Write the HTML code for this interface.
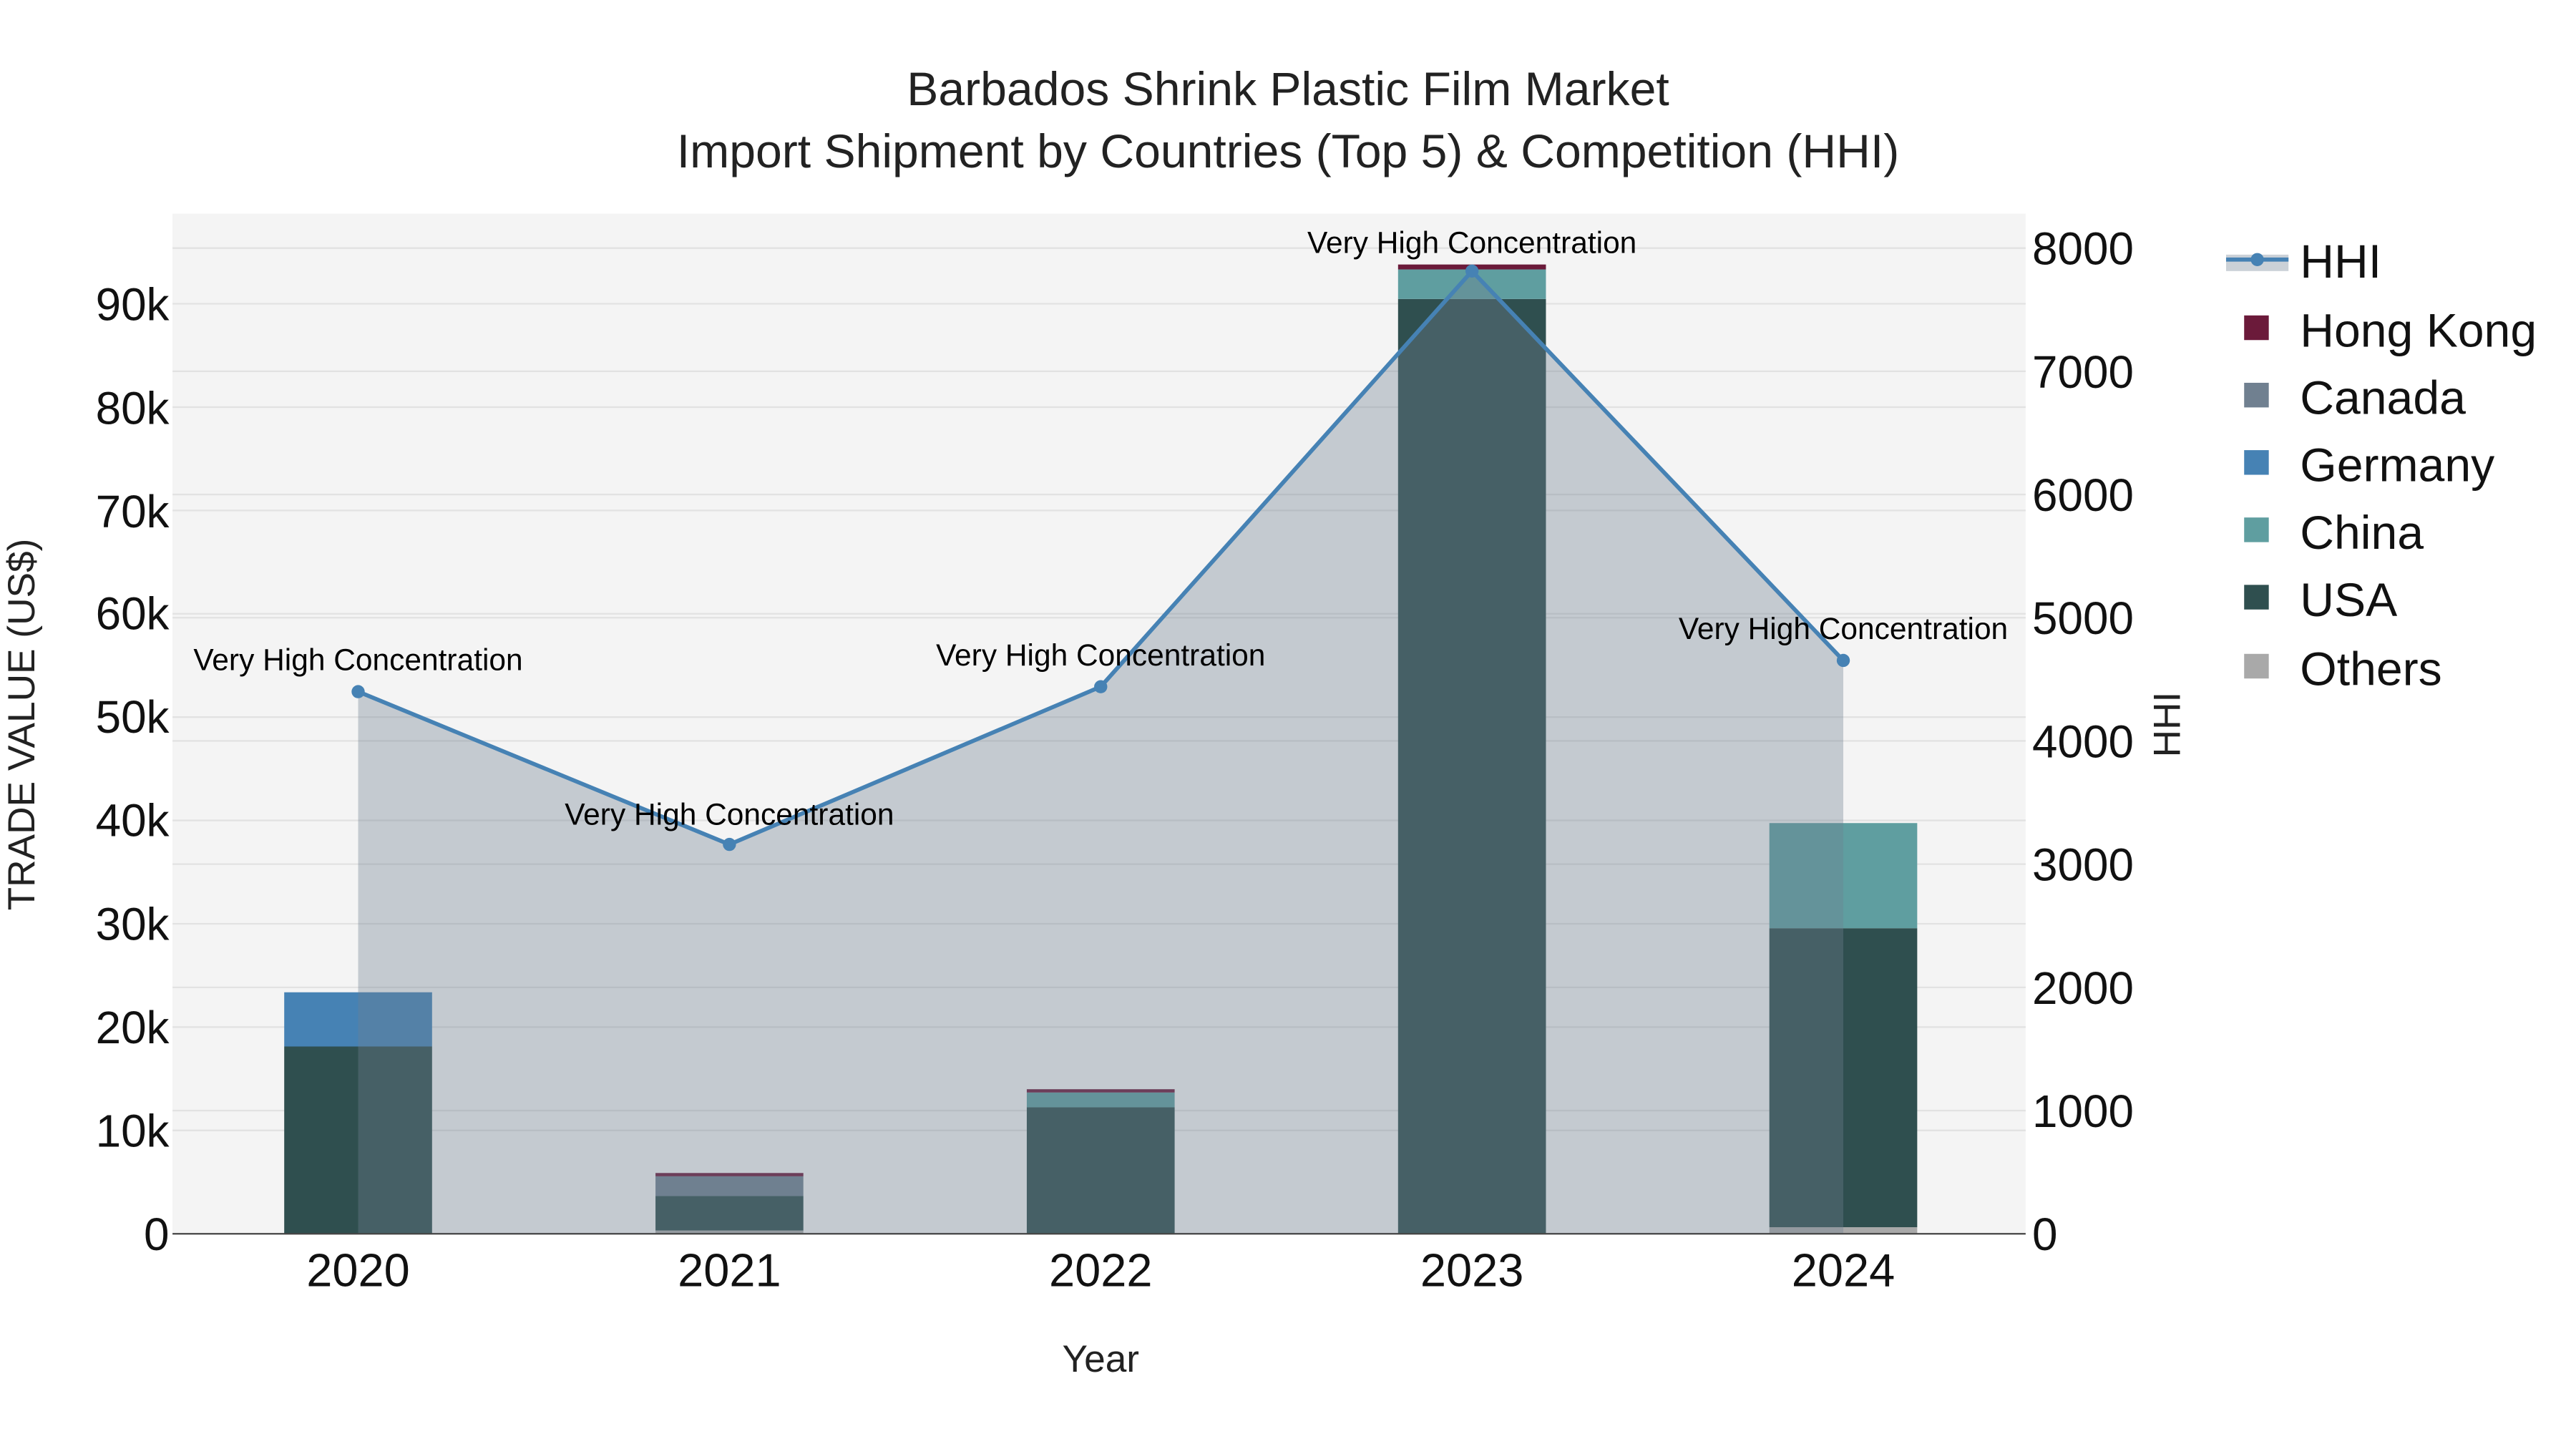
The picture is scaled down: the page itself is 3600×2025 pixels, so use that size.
<!DOCTYPE html>
<html><head><meta charset="utf-8"><style>html,body{margin:0;padding:0;background:#fff}svg{display:block}text{font-family:"Liberation Sans",sans-serif}</style></head>
<body>
<svg width="3600" height="2025" viewBox="0 0 1568 882" preserveAspectRatio="none" xmlns="http://www.w3.org/2000/svg">
<rect width="1568" height="882" fill="#fff"/>
<rect x="105" y="130" width="1128" height="621" fill="#f4f4f4"/>
<g stroke="#e2e2e2" stroke-width="1">
<line x1="105" x2="1233" y1="688.1" y2="688.1"/><line x1="105" x2="1233" y1="625.2" y2="625.2"/><line x1="105" x2="1233" y1="562.3" y2="562.3"/><line x1="105" x2="1233" y1="499.4" y2="499.4"/><line x1="105" x2="1233" y1="436.5" y2="436.5"/><line x1="105" x2="1233" y1="373.6" y2="373.6"/><line x1="105" x2="1233" y1="310.7" y2="310.7"/><line x1="105" x2="1233" y1="247.8" y2="247.8"/><line x1="105" x2="1233" y1="184.9" y2="184.9"/>
<line x1="105" x2="1233" y1="676" y2="676"/><line x1="105" x2="1233" y1="601" y2="601"/><line x1="105" x2="1233" y1="526" y2="526"/><line x1="105" x2="1233" y1="451" y2="451"/><line x1="105" x2="1233" y1="376" y2="376"/><line x1="105" x2="1233" y1="301" y2="301"/><line x1="105" x2="1233" y1="226" y2="226"/><line x1="105" x2="1233" y1="151" y2="151"/>
</g>
<rect x="173" y="637" width="90" height="114" fill="#2f4f4f"/>
<rect x="173" y="604" width="90" height="33" fill="#4682b4"/>
<rect x="399" y="749" width="90" height="2" fill="#a9a9a9"/>
<rect x="399" y="728" width="90" height="21" fill="#2f4f4f"/>
<rect x="399" y="716" width="90" height="12" fill="#708090"/>
<rect x="399" y="714" width="90" height="2" fill="#6b1a3a"/>
<rect x="625" y="674" width="90" height="77" fill="#2f4f4f"/>
<rect x="625" y="665" width="90" height="9" fill="#5f9ea0"/>
<rect x="625" y="663" width="90" height="2" fill="#6b1a3a"/>
<rect x="851" y="182" width="90" height="569" fill="#2f4f4f"/>
<rect x="851" y="164" width="90" height="18" fill="#5f9ea0"/>
<rect x="851" y="161" width="90" height="3" fill="#6b1a3a"/>
<rect x="1077" y="747" width="90" height="4" fill="#a9a9a9"/>
<rect x="1077" y="565" width="90" height="182" fill="#2f4f4f"/>
<rect x="1077" y="501" width="90" height="64" fill="#5f9ea0"/>
<polygon points="218,751 218,421 444,514 670,418 896,165 1122,402 1122,751" fill="rgba(112,128,144,0.36)"/>
<polyline points="218,421 444,514 670,418 896,165 1122,402" fill="none" stroke="#4682b4" stroke-width="2.5"/>
<g fill="#4682b4"><circle cx="218" cy="421" r="4"/><circle cx="444" cy="514" r="4"/><circle cx="670" cy="418" r="4"/><circle cx="896" cy="165" r="4"/><circle cx="1122" cy="402" r="4"/></g>
<line x1="105" x2="1233" y1="751" y2="751" stroke="#444" stroke-width="1"/>
<g font-size="18.5" text-anchor="middle" fill="#000">
<text x="218" y="408">Very High Concentration</text><text x="444" y="502">Very High Concentration</text><text x="670" y="405">Very High Concentration</text><text x="896" y="154">Very High Concentration</text><text x="1122" y="389">Very High Concentration</text>
</g>
<g font-size="27.8" text-anchor="end" fill="#111">
<text x="103" y="761">0</text><text x="103" y="698">10k</text><text x="103" y="635">20k</text><text x="103" y="572">30k</text><text x="103" y="509">40k</text><text x="103" y="446">50k</text><text x="103" y="383">60k</text><text x="103" y="321">70k</text><text x="103" y="258">80k</text><text x="103" y="195">90k</text>
</g>
<g font-size="27.8" fill="#111">
<text x="1237" y="761">0</text><text x="1237" y="686">1000</text><text x="1237" y="611">2000</text><text x="1237" y="536">3000</text><text x="1237" y="461">4000</text><text x="1237" y="386">5000</text><text x="1237" y="311">6000</text><text x="1237" y="236">7000</text><text x="1237" y="161">8000</text>
</g>
<g font-size="28.3" text-anchor="middle" fill="#111">
<text x="218" y="783">2020</text><text x="444" y="783">2021</text><text x="670" y="783">2022</text><text x="896" y="783">2023</text><text x="1122" y="783">2024</text>
</g>
<text x="670" y="835" font-size="23.2" text-anchor="middle" fill="#222">Year</text>
<text transform="translate(21,441) rotate(-90)" font-size="23.2" text-anchor="middle" fill="#222">TRADE VALUE (US$)</text>
<text transform="translate(1327,441) rotate(-90)" font-size="23.2" text-anchor="middle" fill="#222">HHI</text>
<text x="784" y="64" font-size="28.8" text-anchor="middle" fill="#222">Barbados Shrink Plastic Film Market</text>
<text x="784" y="102" font-size="28.8" text-anchor="middle" fill="#222">Import Shipment by Countries (Top 5) &amp; Competition (HHI)</text>
<rect x="1355" y="155" width="38" height="10" fill="rgba(112,128,144,0.36)"/>
<line x1="1355" x2="1393" y1="158" y2="158" stroke="#4682b4" stroke-width="2.5"/><circle cx="1374" cy="158" r="4" fill="#4682b4"/>
<rect x="1366" y="192" width="15" height="15" fill="#6b1a3a"/>
<rect x="1366" y="233" width="15" height="15" fill="#708090"/>
<rect x="1366" y="274" width="15" height="15" fill="#4682b4"/>
<rect x="1366" y="315" width="15" height="15" fill="#5f9ea0"/>
<rect x="1366" y="356" width="15" height="15" fill="#2f4f4f"/>
<rect x="1366" y="398" width="15" height="15" fill="#a9a9a9"/>
<g font-size="28.8" fill="#111">
<text x="1400" y="169">HHI</text><text x="1400" y="211">Hong Kong</text><text x="1400" y="252">Canada</text><text x="1400" y="293">Germany</text><text x="1400" y="334">China</text><text x="1400" y="375">USA</text><text x="1400" y="417">Others</text>
</g>
</svg>
</body></html>
